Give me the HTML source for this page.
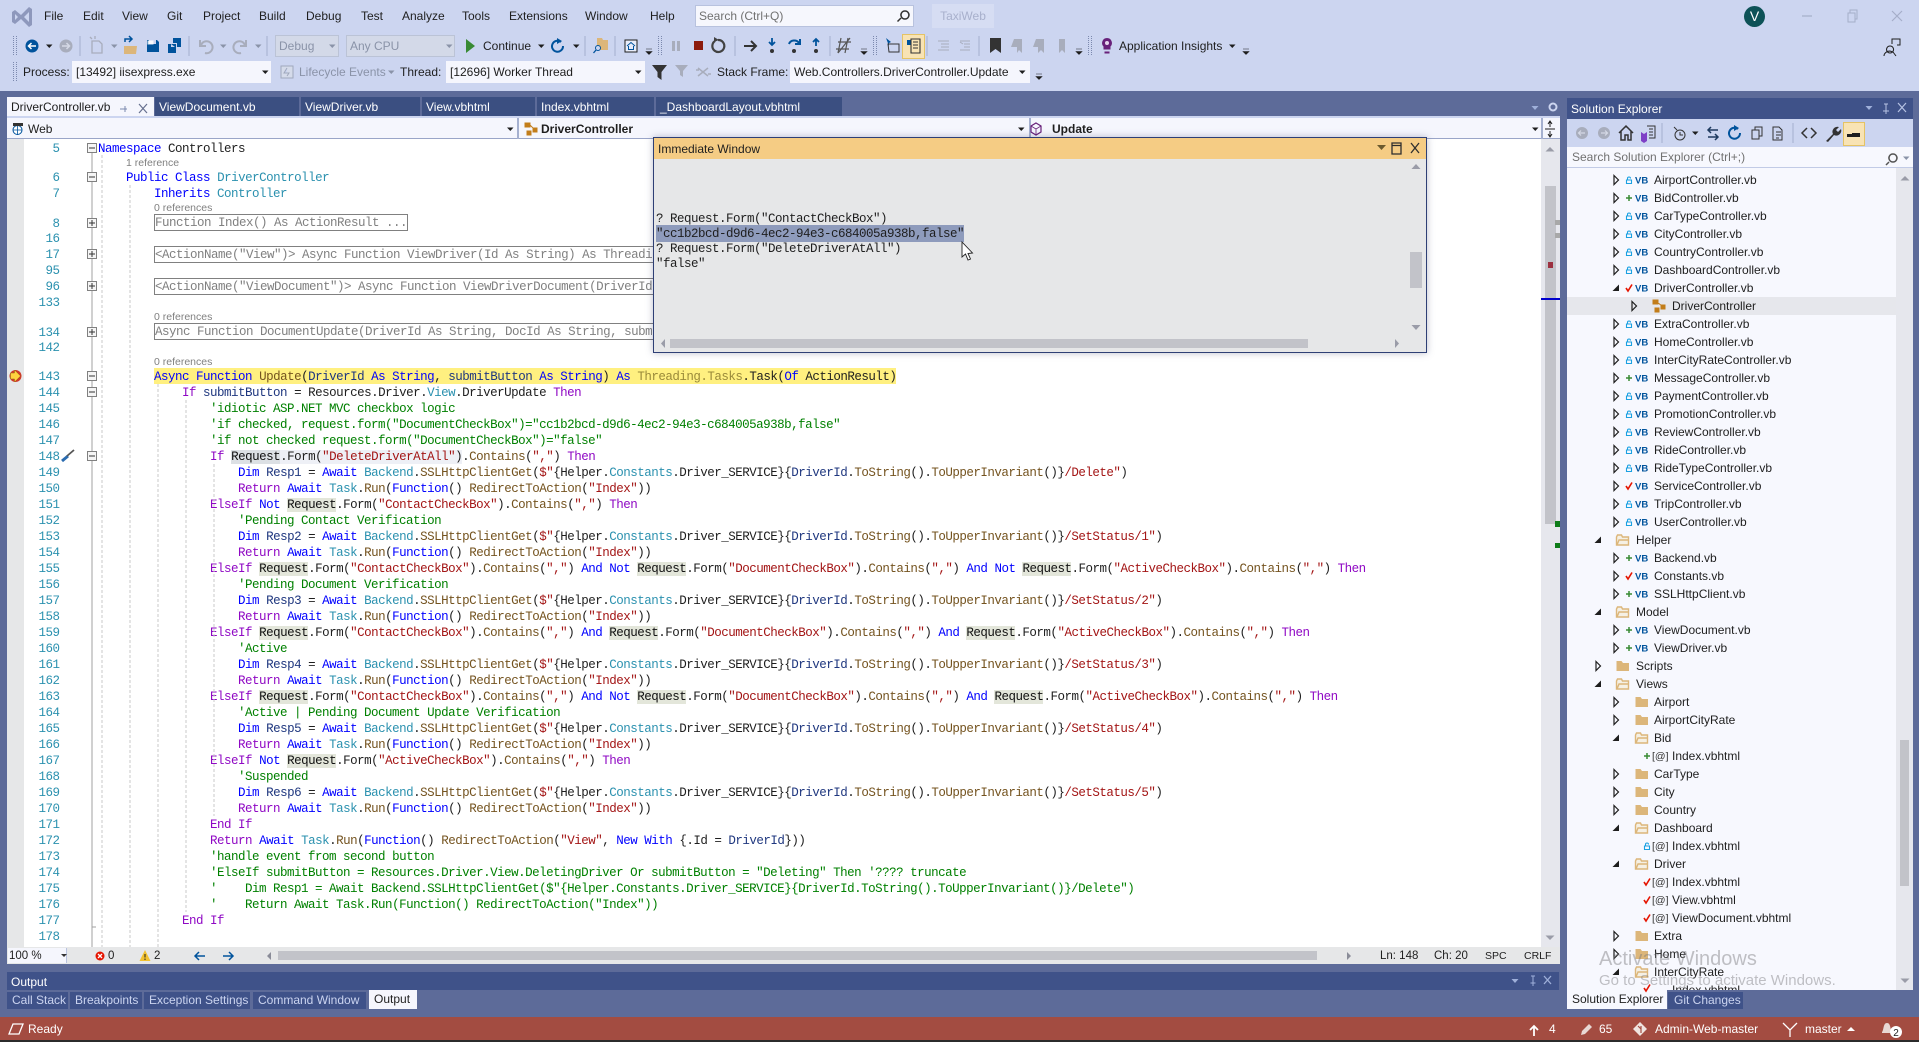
<!DOCTYPE html>
<html><head><meta charset="utf-8"><title>TaxiWeb</title>
<style>
html,body{margin:0;padding:0;width:1919px;height:1042px;overflow:hidden;background:#5D6B99}
body{position:relative;font-family:"Liberation Sans",sans-serif;font-size:12px;color:#1E1E1E}
.a,.m,.t,.r,.e{position:absolute;white-space:pre}
.bx{position:absolute}
.m{top:7px;height:18px;line-height:18px}
.r{height:16px;line-height:16px}
.t{height:18px;line-height:18px}
pre{margin:1px 0 0;position:absolute;font-family:"Liberation Mono",monospace;font-size:12.5px;letter-spacing:-.5px;line-height:16px;font-kerning:none}
.c{position:absolute;left:98px;margin-top:1px;height:16px;line-height:16px;white-space:pre;font-family:"Liberation Mono",monospace;font-size:12.5px;letter-spacing:-.5px;font-kerning:none}
.n{position:absolute;left:24px;margin-top:1px;width:35.5px;text-align:right;color:#2B91AF;height:16px;line-height:16px;font-family:"Liberation Mono",monospace;font-size:12.5px;letter-spacing:-.5px}
.ref{position:absolute;color:#808080;font-size:10.5px;height:14px;line-height:14px;white-space:pre}
.fb{position:absolute;left:154px;height:15px;border:1px solid #808080;color:#808080;line-height:17px;white-space:pre;font-family:"Liberation Mono",monospace;font-size:12.5px;letter-spacing:-.5px;overflow:hidden}
b,i,u,s,em,a,var{font-weight:normal;font-style:normal;text-decoration:none}
b{color:#0000FF} i{color:#8F08C4} u{color:#2B91AF} s{color:#A31515} em{color:#008000} a{color:#74531F} var{color:#1F377F}
mark{background:#E3E6DA;color:#111}
.tb{position:absolute;top:97px;height:19px;line-height:21px;background:#3B4F81;color:#fff;white-space:pre}
.ot{position:absolute;top:992px;height:17px;line-height:17px;background:#3F5289;color:#CBD4F0;white-space:pre}
.combo{position:absolute;top:61px;height:22px;line-height:22px;background:#F5F6FD;white-space:pre}
.st{position:absolute;top:1020px;height:18px;line-height:18px;color:#fff;white-space:pre}
.es{position:absolute;top:948px;height:16px;line-height:16px;font-size:11.5px;white-space:pre}
svg{position:absolute;left:0;top:0}
svg text{font-family:"Liberation Sans",sans-serif}
.vb{font-size:9.5px;font-weight:bold;fill:#00539C}
.at{font-size:10.5px;fill:#333}
</style></head><body>

<!-- title / toolbars -->
<div class="bx" style="left:0;top:0;width:1919px;height:91px;background:#CCD5F0"></div>
<div class="m" style="left:44px">File</div><div class="m" style="left:83px">Edit</div><div class="m" style="left:122px">View</div><div class="m" style="left:167px">Git</div><div class="m" style="left:203px">Project</div><div class="m" style="left:259px">Build</div><div class="m" style="left:306px">Debug</div><div class="m" style="left:361px">Test</div><div class="m" style="left:402px">Analyze</div><div class="m" style="left:462px">Tools</div><div class="m" style="left:509px">Extensions</div><div class="m" style="left:585px">Window</div><div class="m" style="left:650px">Help</div>
<div class="bx" style="left:695px;top:5px;width:217px;height:20px;line-height:20px;background:#F6F7FD;border:1px solid #B8C2DE;color:#717171;text-indent:3px">Search (Ctrl+Q)</div>
<div class="bx" style="left:932px;top:4px;width:62px;height:24px;line-height:24px;background:#D6DDF3;color:#A8B0CC;text-align:center">TaxiWeb</div>
<div class="bx" style="left:1744px;top:6px;width:21px;height:21px;border-radius:50%;background:#0D5257;color:#fff;text-align:center;line-height:21px;font-size:14px">V</div>

<div class="bx" style="left:275px;top:35px;width:62px;height:20px;line-height:20px;background:#D3D9E8;border:1px solid #BBC3D6;color:#8A93A8;text-indent:3px">Debug</div>
<div class="bx" style="left:346px;top:35px;width:107px;height:20px;line-height:20px;background:#D3D9E8;border:1px solid #BBC3D6;color:#8A93A8;text-indent:3px">Any CPU</div>
<div class="a" style="left:483px;top:37px;line-height:18px">Continue</div>
<div class="a" style="left:1119px;top:37px;line-height:18px">Application Insights</div>

<div class="a" style="left:23px;top:63px;line-height:18px">Process:</div>
<div class="combo" style="left:72px;width:199px;text-indent:4px">[13492] iisexpress.exe</div>
<div class="a" style="left:299px;top:63px;line-height:18px;color:#8A93A8">Lifecycle Events</div>
<div class="a" style="left:400px;top:63px;line-height:18px">Thread:</div>
<div class="combo" style="left:446px;width:199px;text-indent:4px">[12696] Worker Thread</div>
<div class="a" style="left:717px;top:63px;line-height:18px">Stack Frame:</div>
<div class="combo" style="left:790px;width:240px;text-indent:4px">Web.Controllers.DriverController.Update</div>
<div class="bx" style="left:902px;top:34px;width:21px;height:23px;background:#F8E3B4;border:1px solid #E5C365"></div>

<!-- doc tabs -->
<div class="tb" style="left:7px;width:147px;background:#F5F6FD;color:#1E1E1E;text-indent:4px;height:21px">DriverController.vb</div>
<div class="tb" style="left:155px;width:144px;text-indent:4px">ViewDocument.vb</div>
<div class="tb" style="left:301px;width:119px;text-indent:4px">ViewDriver.vb</div>
<div class="tb" style="left:422px;width:113px;text-indent:4px">View.vbhtml</div>
<div class="tb" style="left:537px;width:117px;text-indent:4px">Index.vbhtml</div>
<div class="tb" style="left:656px;width:186px;text-indent:4px">_DashboardLayout.vbhtml</div>

<!-- nav bar -->
<div class="bx" style="left:7px;top:116px;width:1553px;height:2px;background:#CCD5F0"></div>
<div class="bx" style="left:7px;top:118px;width:1553px;height:21px;background:#F5F6FD;border-bottom:1px solid #9AA5C8;box-sizing:border-box"></div>
<div class="bx" style="left:517px;top:118px;width:2px;height:21px;background:#A5B0CF"></div>
<div class="bx" style="left:1029px;top:118px;width:2px;height:21px;background:#A5B0CF"></div>
<div class="bx" style="left:1541px;top:118px;width:2px;height:21px;background:#A5B0CF"></div>
<div class="a" style="left:28px;top:121px;line-height:17px">Web</div>
<div class="a" style="left:541px;top:121px;line-height:17px;font-weight:bold">DriverController</div>
<div class="a" style="left:1052px;top:121px;line-height:17px;font-weight:bold">Update</div>

<!-- editor -->
<div class="bx" id="ed" style="left:7px;top:139px;width:1553px;height:808px;background:#fff"></div>
<div class="bx" style="left:7px;top:139px;width:17px;height:808px;background:#E6E7E8"></div>
<div class="bx" style="left:1541px;top:139px;width:19px;height:808px;background:#E6E7ED"></div>
<div class="bx" style="left:1545px;top:186px;width:11px;height:338px;background:#C2C3C9"></div>
<div class="bx" style="left:154px;top:368px;width:742px;height:16px;background:#FFF080"></div>

<div class="n" style="top:140px">5</div><div class="n" style="top:169px">6</div><div class="n" style="top:185px">7</div><div class="n" style="top:215px">8</div><div class="n" style="top:230px">16</div><div class="n" style="top:246px">17</div><div class="n" style="top:262px">95</div><div class="n" style="top:278px">96</div><div class="n" style="top:294px">133</div><div class="n" style="top:324px">134</div><div class="n" style="top:339px">142</div>
<pre style="left:24px;top:368px;width:35.5px;text-align:right;color:#2B91AF">143
144
145
146
147
148
149
150
151
152
153
154
155
156
157
158
159
160
161
162
163
164
165
166
167
168
169
170
171
172
173
174
175
176
177
178</pre>

<div class="c" style="top:140px"><b>Namespace</b> Controllers</div>
<div class="ref" style="left:126px;top:156px">1 reference</div>
<div class="c" style="top:169px;left:126px"><b>Public</b> <b>Class</b> <u>DriverController</u></div>
<div class="c" style="top:185px;left:154px"><b>Inherits</b> <u>Controller</u></div>
<div class="ref" style="left:154px;top:201px">0 references</div>
<div class="fb" style="top:214px;width:252px">Function Index() As ActionResult ...</div>
<div class="fb" style="top:246px;width:520px">&lt;ActionName("View")&gt; Async Function ViewDriver(Id As String) As Threading.Tasks</div>
<div class="fb" style="top:278px;width:520px">&lt;ActionName("ViewDocument")&gt; Async Function ViewDriverDocument(DriverId As String</div>
<div class="ref" style="left:154px;top:310px">0 references</div>
<div class="fb" style="top:323px;width:520px">Async Function DocumentUpdate(DriverId As String, DocId As String, submitButton As</div>
<div class="ref" style="left:154px;top:355px">0 references</div>

<pre style="left:98px;top:368px">        <b>Async</b> <b>Function</b> <a>Update</a>(<var>DriverId</var> <b>As</b> <b>String</b>, <var>submitButton</var> <b>As</b> <b>String</b>) <b>As</b> <span style="color:#9a8a3a">Threading.Tasks</span>.Task(<b>Of</b> ActionResult)
            <i>If</i> <var>submitButton</var> = Resources.Driver.<u>View</u>.DriverUpdate <i>Then</i>
                <em>'idiotic ASP.NET MVC checkbox logic</em>
                <em>'if checked, request.form("DocumentCheckBox")="cc1b2bcd-d9d6-4ec2-94e3-c684005a938b,false"</em>
                <em>'if not checked request.form("DocumentCheckBox")="false"</em>
                <i>If</i> <mark style="background:#DCE0E4">Request</mark><span style="background:#EEF0F6">.Form(<s>"DeleteDriverAtAll"</s>)</span>.<a>Contains</a>(<s>","</s>) <i>Then</i>
                    <b>Dim</b> <var>Resp1</var> = <b>Await</b> <u>Backend</u>.<a>SSLHttpClientGet</a>(<s>$"</s>{Helper.<u>Constants</u>.Driver_SERVICE}{<var>DriverId</var>.<a>ToString</a>().<a>ToUpperInvariant</a>()}<s>/Delete"</s>)
                    <i>Return</i> <b>Await</b> <u>Task</u>.<a>Run</a>(<b>Function</b>() <a>RedirectToAction</a>(<s>"Index"</s>))
                <i>ElseIf</i> <b>Not</b> <mark>Request</mark>.Form(<s>"ContactCheckBox"</s>).<a>Contains</a>(<s>","</s>) <i>Then</i>
                    <em>'Pending Contact Verification</em>
                    <b>Dim</b> <var>Resp2</var> = <b>Await</b> <u>Backend</u>.<a>SSLHttpClientGet</a>(<s>$"</s>{Helper.<u>Constants</u>.Driver_SERVICE}{<var>DriverId</var>.<a>ToString</a>().<a>ToUpperInvariant</a>()}<s>/SetStatus/1"</s>)
                    <i>Return</i> <b>Await</b> <u>Task</u>.<a>Run</a>(<b>Function</b>() <a>RedirectToAction</a>(<s>"Index"</s>))
                <i>ElseIf</i> <mark>Request</mark>.Form(<s>"ContactCheckBox"</s>).<a>Contains</a>(<s>","</s>) <b>And</b> <b>Not</b> <mark>Request</mark>.Form(<s>"DocumentCheckBox"</s>).<a>Contains</a>(<s>","</s>) <b>And</b> <b>Not</b> <mark>Request</mark>.Form(<s>"ActiveCheckBox"</s>).<a>Contains</a>(<s>","</s>) <i>Then</i>
                    <em>'Pending Document Verification</em>
                    <b>Dim</b> <var>Resp3</var> = <b>Await</b> <u>Backend</u>.<a>SSLHttpClientGet</a>(<s>$"</s>{Helper.<u>Constants</u>.Driver_SERVICE}{<var>DriverId</var>.<a>ToString</a>().<a>ToUpperInvariant</a>()}<s>/SetStatus/2"</s>)
                    <i>Return</i> <b>Await</b> <u>Task</u>.<a>Run</a>(<b>Function</b>() <a>RedirectToAction</a>(<s>"Index"</s>))
                <i>ElseIf</i> <mark>Request</mark>.Form(<s>"ContactCheckBox"</s>).<a>Contains</a>(<s>","</s>) <b>And</b> <mark>Request</mark>.Form(<s>"DocumentCheckBox"</s>).<a>Contains</a>(<s>","</s>) <b>And</b> <mark>Request</mark>.Form(<s>"ActiveCheckBox"</s>).<a>Contains</a>(<s>","</s>) <i>Then</i>
                    <em>'Active</em>
                    <b>Dim</b> <var>Resp4</var> = <b>Await</b> <u>Backend</u>.<a>SSLHttpClientGet</a>(<s>$"</s>{Helper.<u>Constants</u>.Driver_SERVICE}{<var>DriverId</var>.<a>ToString</a>().<a>ToUpperInvariant</a>()}<s>/SetStatus/3"</s>)
                    <i>Return</i> <b>Await</b> <u>Task</u>.<a>Run</a>(<b>Function</b>() <a>RedirectToAction</a>(<s>"Index"</s>))
                <i>ElseIf</i> <mark>Request</mark>.Form(<s>"ContactCheckBox"</s>).<a>Contains</a>(<s>","</s>) <b>And</b> <b>Not</b> <mark>Request</mark>.Form(<s>"DocumentCheckBox"</s>).<a>Contains</a>(<s>","</s>) <b>And</b> <mark>Request</mark>.Form(<s>"ActiveCheckBox"</s>).<a>Contains</a>(<s>","</s>) <i>Then</i>
                    <em>'Active | Pending Document Update Verification</em>
                    <b>Dim</b> <var>Resp5</var> = <b>Await</b> <u>Backend</u>.<a>SSLHttpClientGet</a>(<s>$"</s>{Helper.<u>Constants</u>.Driver_SERVICE}{<var>DriverId</var>.<a>ToString</a>().<a>ToUpperInvariant</a>()}<s>/SetStatus/4"</s>)
                    <i>Return</i> <b>Await</b> <u>Task</u>.<a>Run</a>(<b>Function</b>() <a>RedirectToAction</a>(<s>"Index"</s>))
                <i>ElseIf</i> <b>Not</b> <mark>Request</mark>.Form(<s>"ActiveCheckBox"</s>).<a>Contains</a>(<s>","</s>) <i>Then</i>
                    <em>'Suspended</em>
                    <b>Dim</b> <var>Resp6</var> = <b>Await</b> <u>Backend</u>.<a>SSLHttpClientGet</a>(<s>$"</s>{Helper.<u>Constants</u>.Driver_SERVICE}{<var>DriverId</var>.<a>ToString</a>().<a>ToUpperInvariant</a>()}<s>/SetStatus/5"</s>)
                    <i>Return</i> <b>Await</b> <u>Task</u>.<a>Run</a>(<b>Function</b>() <a>RedirectToAction</a>(<s>"Index"</s>))
                <i>End If</i>
                <i>Return</i> <b>Await</b> <u>Task</u>.<a>Run</a>(<b>Function</b>() <a>RedirectToAction</a>(<s>"View"</s>, <b>New</b> <b>With</b> {.Id = <var>DriverId</var>}))
                <em>'handle event from second button</em>
                <em>'ElseIf submitButton = Resources.Driver.View.DeletingDriver Or submitButton = "Deleting" Then '???? truncate</em>
                <em>'    Dim Resp1 = Await Backend.SSLHttpClientGet($"{Helper.Constants.Driver_SERVICE}{DriverId.ToString().ToUpperInvariant()}/Delete")</em>
                <em>'    Return Await Task.Run(Function() RedirectToAction("Index"))</em>
            <i>End If</i></pre>

<!-- editor status -->
<div class="bx" style="left:7px;top:947px;width:1553px;height:17px;background:#E6E7E8"></div>
<div class="bx" style="left:8px;top:948px;width:58px;height:15px;background:#F5F6FD;border-right:1px solid #B8C2DE"></div>
<div class="es" style="left:9px">100 %</div><div class="es" style="left:108px">0</div><div class="es" style="left:154px">2</div>
<div class="bx" style="left:278px;top:951px;width:1039px;height:9px;background:#C2C3C9"></div>
<div class="es" style="left:1380px">Ln: 148</div><div class="es" style="left:1434px">Ch: 20</div><div class="es" style="left:1485px;font-size:10.5px">SPC</div><div class="es" style="left:1524px;font-size:10.5px">CRLF</div>

<!-- output panel -->
<div class="bx" style="left:7px;top:972px;width:1552px;height:18px;background:#3F5289;color:#fff;line-height:21px;text-indent:4px">Output</div>
<div class="ot" style="left:7px;width:61px;text-indent:5px">Call Stack</div>
<div class="ot" style="left:70px;width:72px;text-indent:5px">Breakpoints</div>
<div class="ot" style="left:144px;width:106px;text-indent:5px">Exception Settings</div>
<div class="ot" style="left:253px;width:113px;text-indent:5px">Command Window</div>
<div class="ot" style="left:369px;width:48px;top:990px;height:19px;line-height:19px;background:#F5F6FD;color:#1E1E1E;text-indent:5px">Output</div>

<!-- status bar -->
<div class="bx" style="left:0;top:1017px;width:1919px;height:23px;background:#A34C41"></div>
<div class="bx" style="left:0;top:1040px;width:1919px;height:2px;background:#2B2B2B"></div>
<div class="st" style="left:28px">Ready</div>
<div class="st" style="left:1549px">4</div><div class="st" style="left:1599px">65</div><div class="st" style="left:1655px">Admin-Web-master</div><div class="st" style="left:1805px">master</div>

<!-- solution explorer -->
<div class="bx" style="left:1567px;top:98px;width:346px;height:21px;background:#3F5289;color:#fff;line-height:22px;text-indent:4px">Solution Explorer</div>
<div class="bx" style="left:1567px;top:119px;width:346px;height:28px;background:#CCD5F0"></div>
<div class="bx" style="left:1843px;top:122px;width:20px;height:22px;background:#F8E3B4;border:1px solid #E5C365"></div>
<div class="bx" style="left:1567px;top:147px;width:346px;height:21px;background:#F7F8FE;border-bottom:1px solid #C2CBE6;box-sizing:border-box;color:#717171;line-height:21px;text-indent:5px">Search Solution Explorer (Ctrl+;)</div>
<div class="bx" style="left:1567px;top:168px;width:346px;height:822px;background:#F7F8FE;overflow:hidden" id="tree">
<div class="bx" style="left:0;top:129px;width:329px;height:18px;background:#E6E7EC"></div>
<div class="bx" style="left:329px;top:0;width:17px;height:822px;background:#E6E7ED"></div>
<div class="bx" style="left:333px;top:572px;width:9px;height:146px;background:#C2C3C9"></div>
<div class="t" style="left:87px;top:3px">AirportController.vb</div>
<div class="t" style="left:87px;top:21px">BidController.vb</div>
<div class="t" style="left:87px;top:39px">CarTypeController.vb</div>
<div class="t" style="left:87px;top:57px">CityController.vb</div>
<div class="t" style="left:87px;top:75px">CountryController.vb</div>
<div class="t" style="left:87px;top:93px">DashboardController.vb</div>
<div class="t" style="left:87px;top:111px">DriverController.vb</div>
<div class="t" style="left:105px;top:129px">DriverController</div>
<div class="t" style="left:87px;top:147px">ExtraController.vb</div>
<div class="t" style="left:87px;top:165px">HomeController.vb</div>
<div class="t" style="left:87px;top:183px">InterCityRateController.vb</div>
<div class="t" style="left:87px;top:201px">MessageController.vb</div>
<div class="t" style="left:87px;top:219px">PaymentController.vb</div>
<div class="t" style="left:87px;top:237px">PromotionController.vb</div>
<div class="t" style="left:87px;top:255px">ReviewController.vb</div>
<div class="t" style="left:87px;top:273px">RideController.vb</div>
<div class="t" style="left:87px;top:291px">RideTypeController.vb</div>
<div class="t" style="left:87px;top:309px">ServiceController.vb</div>
<div class="t" style="left:87px;top:327px">TripController.vb</div>
<div class="t" style="left:87px;top:345px">UserController.vb</div>
<div class="t" style="left:69px;top:363px">Helper</div>
<div class="t" style="left:87px;top:381px">Backend.vb</div>
<div class="t" style="left:87px;top:399px">Constants.vb</div>
<div class="t" style="left:87px;top:417px">SSLHttpClient.vb</div>
<div class="t" style="left:69px;top:435px">Model</div>
<div class="t" style="left:87px;top:453px">ViewDocument.vb</div>
<div class="t" style="left:87px;top:471px">ViewDriver.vb</div>
<div class="t" style="left:69px;top:489px">Scripts</div>
<div class="t" style="left:69px;top:507px">Views</div>
<div class="t" style="left:87px;top:525px">Airport</div>
<div class="t" style="left:87px;top:543px">AirportCityRate</div>
<div class="t" style="left:87px;top:561px">Bid</div>
<div class="t" style="left:105px;top:579px">Index.vbhtml</div>
<div class="t" style="left:87px;top:597px">CarType</div>
<div class="t" style="left:87px;top:615px">City</div>
<div class="t" style="left:87px;top:633px">Country</div>
<div class="t" style="left:87px;top:651px">Dashboard</div>
<div class="t" style="left:105px;top:669px">Index.vbhtml</div>
<div class="t" style="left:87px;top:687px">Driver</div>
<div class="t" style="left:105px;top:705px">Index.vbhtml</div>
<div class="t" style="left:105px;top:723px">View.vbhtml</div>
<div class="t" style="left:105px;top:741px">ViewDocument.vbhtml</div>
<div class="t" style="left:87px;top:759px">Extra</div>
<div class="t" style="left:87px;top:777px">Home</div>
<div class="t" style="left:87px;top:795px">InterCityRate</div>
<div class="t" style="left:105px;top:813px">Index.vbhtml</div>
</div>
<div class="bx" style="left:1567px;top:990px;width:100px;height:19px;line-height:19px;background:#F7F8FE;text-indent:5px">Solution Explorer</div>
<div class="ot" style="left:1668px;width:75px;text-indent:6px">Git Changes</div>

<!-- icons -->
<svg width="1919" height="1042" viewBox="0 0 1919 1042">
<defs>
<path id="dd" d="M-3-1.5h6.5l-3.2 3.5z" fill="#1E1E1E"/>
<path id="ddg" d="M-3-1.5h6.5l-3.2 3.5z" fill="#8A93A8"/>
<path id="ddw" d="M-3.500-2h7l-3.500 4z" fill="#9FB0DA"/>
<path id="grip" d="M-1.500-10V10M1.500-10V10" stroke="#7C89AE" stroke-dasharray="1 1" fill="none"/>
<path id="sep" d="M0-10V10" stroke="#A3AFCE"/>
<path id="chev" d="M-3 1h6M-3 3.500h6l-3 3z" fill="#1E1E1E" stroke="#1E1E1E" stroke-width=".6"/>
<path id="ca" d="M-2-4.500L2.500 0L-2 4.500Z" fill="none" stroke="#1E1E1E" stroke-width="1.200"/>
<path id="ex" d="M3-3.500V3H-3.500Z" fill="#1E1E1E"/>
<path id="lk" d="M-2.500 0h5v3.500h-5zM-1.500 0v-1.500a1.500 1.500 0 0 1 3 0" fill="none" stroke="#1BA1E2" stroke-width="1.100"/>
<path id="pl" d="M-3 0h6M0-3v6" stroke="#388A34" stroke-width="1.500"/>
<path id="ck" d="M-3 0L-1 3L3-3.500" stroke="#E51400" stroke-width="1.600" fill="none"/>
<path id="fo" d="M-6.500-5h5l1.500 2h6v8h-12.500z" fill="#DCB67A"/>
<path id="fe" d="M-6.500 5V-3l1-2h4l1 2h6v8zM-6 5l2-5h10" fill="#F5F0E4" stroke="#DCB67A" stroke-width="1.400"/>
<path id="fold" d="M-4.500-4.500h9v9h-9z" fill="#F5F5F5" stroke="#808080"/>
<path id="up" d="M-4.500 2.500h9l-4.500-4.500z" fill="#9A9CA8"/>
<path id="dn" d="M-4.500-2.500h9l-4.500 4.500z" fill="#9A9CA8"/>
</defs>

<!-- VS logo -->
<path d="M12 12l3-2 6 5 8-8 3 2v16l-3 2-8-8-6 5-3-2zM15 14v6l3-3zM29 12l-5 5 5 5z" fill="#8E98BC" fill-rule="evenodd"/>
<!-- search glass -->
<path d="M905 11a4 4 0 1 1-.1 0zM901 18l-3.500 3.500" fill="none" stroke="#333" stroke-width="1.500"/>
<!-- window controls -->
<path d="M1802 16h10" stroke="#A5AEC9" stroke-width="1.200"/>
<path d="M1848 13h7v9h-7zM1850 13v-3h7v9h-2" fill="none" stroke="#A5AEC9"/>
<path d="M1892 11l10 10M1902 11l-10 10" stroke="#A5AEC9" stroke-width="1.200"/>
<!-- feedback -->
<path d="M1890 46a3.500 3.500 0 1 0 .1 0zM1884 56a6 5 0 0 1 6-5l3 1 3 4M1892 44v-5h8v6h-3" fill="none" stroke="#1E1E1E"/>

<!-- toolbar 1 -->
<use href="#grip" x="15" y="46"/>
<circle cx="32" cy="46" r="6.500" fill="#00539C"/><path d="M36 46h-7M31.500 43L28.500 46l3 3" stroke="#fff" stroke-width="1.500" fill="none"/>
<use href="#dd" x="49" y="46"/>
<circle cx="66" cy="46" r="6.500" fill="#A8ADBC"/><path d="M62 46h7M66.500 43l3 3-3 3" stroke="#D5D9E5" stroke-width="1.500" fill="none"/>
<use href="#sep" x="80" y="46"/>
<path d="M92 41h7l3 3v9H92zM90 37l2 2M95 36v3" fill="none" stroke="#A8ADBC" stroke-width="1.300"/>
<use href="#ddg" x="114" y="46"/>
<path d="M124 46h13l-1 8h-12z" fill="#DCB67A"/><path d="M125 42v-3h6M129 36l3 3-3 3" fill="none" stroke="#00539C" stroke-width="1.500"/>
<path d="M147 40h10l2 2v10h-12zM149 40v4h7v-4M149 52v-5h8v5" fill="#00539C"/>
<path d="M147.500 40.500h6v4h-6z" fill="#fff" opacity=".85"/>
<path d="M168 44h8v9h-8zM171 44v3h4" fill="#00539C"/><path d="M173 38h8v9h-4v-4h-4z" fill="#00539C"/>
<use href="#sep" x="189" y="46"/>
<path d="M200 40v6h6M201 45a6 6 0 1 1 4 8" fill="none" stroke="#A8ADBC" stroke-width="2"/>
<use href="#ddg" x="223" y="46"/>
<path d="M246 40v6h-6M245 45a6 6 0 1 0-4 8" fill="none" stroke="#A8ADBC" stroke-width="2"/>
<use href="#ddg" x="258" y="46"/>
<use href="#sep" x="267" y="46"/>
<use href="#ddg" x="332" y="46"/><use href="#ddg" x="449" y="46"/>
<path d="M466 39l9 7-9 7z" fill="#388A34"/>
<use href="#dd" x="541" y="46"/>
<path d="M561 42a5.500 5.500 0 1 0 2 4" fill="none" stroke="#00539C" stroke-width="2"/><path d="M557 38v6l5-3z" fill="#00539C"/>
<use href="#dd" x="576" y="46"/>
<use href="#sep" x="585" y="46"/>
<path d="M597 38h5l1 2h5v10h-11z" fill="#DCB67A"/><circle cx="598" cy="48" r="2.500" fill="#CCD5F0" stroke="#00539C"/><path d="M596 50l-2.500 3" stroke="#00539C" stroke-width="1.300"/>
<use href="#sep" x="615" y="46"/>
<path d="M625 40h12v12h-12z" fill="#E9EDFA" stroke="#1E1E1E"/><path d="M627 46l4-3.500 4 3.500M628.500 46v3.500h5V46" fill="none" stroke="#00539C"/>
<use href="#chev" x="649" y="48"/><use href="#grip" x="660" y="46"/>
<path d="M672 41h3v10h-3zM677 41h3v10h-3z" fill="#A8ADBC"/>
<path d="M694 41h9v9h-9z" fill="#8C1B0C"/>
<path d="M715 41a6 6 0 1 0 3-1" fill="none" stroke="#424242" stroke-width="2.200"/><path d="M714 37v5l5-2z" fill="#424242"/>
<use href="#sep" x="735" y="46"/>
<path d="M744 46h12M751 41l5 5-5 5" fill="none" stroke="#333" stroke-width="2"/>
<path d="M772 38v6M769 42l3 3 3-3" stroke="#00539C" stroke-width="1.800" fill="none"/><circle cx="772" cy="51" r="2" fill="#333"/>
<path d="M789 44a5.500 5 0 0 1 10-1M800 39v5h-5" fill="none" stroke="#00539C" stroke-width="2"/><circle cx="794" cy="51" r="2" fill="#333"/>
<path d="M816 46v-7M813 42l3-3 3 3" stroke="#00539C" stroke-width="1.800" fill="none"/><circle cx="816" cy="51" r="2" fill="#333"/>
<use href="#sep" x="830" y="46"/>
<path d="M841 38l-3 15M848 38l-3 15M838 42h13M836 49h13M850 38l-12 15" fill="none" stroke="#555" stroke-width="1.200"/>
<use href="#chev" x="864" y="48"/><use href="#grip" x="875" y="46"/>
<path d="M886 38l5 4-2 1v3" fill="#00539C"/><path d="M888 44h11v8h-10z" fill="none" stroke="#333"/>
<path d="M907 40h4v5h-4z" fill="#00539C"/><path d="M911 39h9v14h-9zM913 42h5M913 45h5M913 48h5" fill="none" stroke="#333" stroke-width="1.100"/>
<use href="#sep" x="927" y="46"/>
<path d="M938 41h11M941 44h8M941 47h8M938 50h11" stroke="#A8ADBC"/>
<path d="M960 41h10M964 44h6M964 47h6M960 50h10M960 42l3 2" stroke="#A8ADBC"/>
<use href="#sep" x="979" y="46"/>
<path d="M990 38h11v15l-5.500-4-5.500 4z" fill="#333"/>
<path d="M1014 39h8v14l-3-3-2 3v-6h-6z" fill="#A8ADBC"/><path d="M1036 39h8v14l-3-3-3 3v-6h-5z" fill="#A8ADBC"/><path d="M1057 39h8v14l-3-3-3 3v-14z" fill="#A8ADBC"/>
<use href="#chev" x="1079" y="48"/><use href="#grip" x="1090" y="46"/>
<path d="M1107 38a5 5 0 0 1 3.500 8.500v3h-7v-3a5 5 0 0 1 3.500-8.500zM1104.500 51.500h5v2h-5z" fill="#68217A"/><circle cx="1107" cy="43" r="2" fill="#E6D5EC"/>
<use href="#dd" x="1232" y="46"/><use href="#chev" x="1246" y="48"/>

<!-- toolbar 2 -->
<use href="#grip" x="15" y="72"/>
<use href="#dd" x="265" y="72"/>
<path d="M281 66h12v12h-12zM287 68l-3 5h5l-2 3" fill="#D5DBEA" stroke="#A0A8BC"/>
<use href="#ddg" x="391" y="72"/><use href="#dd" x="638" y="72"/>
<path d="M652 65h15l-5.500 7v8l-4-3v-5z" fill="#333"/>
<path d="M675 65h13l-5 6v6l-3-2v-4z" fill="#A8ADBC"/><path d="M698 68l10 8M708 68l-10 8M696 70h3M708 74h3" stroke="#A8ADBC" stroke-width="1.500"/>
<use href="#dd" x="1022" y="72"/><use href="#chev" x="1039" y="73"/>

<!-- doc tab marks -->
<path d="M122 109h5M125 106v6M122 109h-2" stroke="#7C89AE"/>
<path d="M139 104l8 9M147 104l-8 9" stroke="#66708F" stroke-width="1.200"/>
<use href="#ddw" x="1535" y="108"/>
<circle cx="1553" cy="107" r="3.500" fill="none" stroke="#CCD5F0" stroke-width="2"/>
<use href="#dd" x="510" y="129"/><use href="#dd" x="1021" y="129"/><use href="#dd" x="1535" y="129"/>
<circle cx="17.500" cy="130" r="4.500" fill="#fff" stroke="#00539C"/><path d="M13 123h10v3H13z" fill="#333"/><path d="M13 130h9M17.500 126v9" stroke="#00539C" stroke-width=".8"/>
<path d="M525 123h5v4h-5zM533 128h4v4h-4zM527 131h4v4h-4zM530 125l4 4" fill="#C27D1A" stroke="#C27D1A"/>
<path d="M1036 123l5 3v6l-5 3-5-3v-6z" fill="none" stroke="#68217A" stroke-width="1.200"/><path d="M1031 126l5 3 5-3M1036 129v6" fill="none" stroke="#68217A" stroke-width=".8"/>
<path d="M1545 129h10M1550 121v6M1548 124l2-3 2 3M1550 131v6M1548 134l2 3 2-3" stroke="#1E1E1E" fill="none"/>

<!-- gutter: fold lines & guides -->
<path d="M92 153V172M92 182V218M92 228V249M92 259V281M92 291V327M92 337V371M92 381V387M92 397V451M92 461V947" stroke="#A0A0A0"/>
<path d="M102 155V947M130 185V947M158 384V947M186 400V912M214 464V816" stroke="#C8C8C8" stroke-dasharray="3 2"/>
<use href="#fold" x="92" y="148"/><path d="M89 148h6" stroke="#333"/>
<use href="#fold" x="92" y="177"/><path d="M89 177h6" stroke="#333"/>
<use href="#fold" x="92" y="223"/><path d="M89 223h6M92 220v6" stroke="#333"/>
<use href="#fold" x="92" y="254"/><path d="M89 254h6M92 251v6" stroke="#333"/>
<use href="#fold" x="92" y="286"/><path d="M89 286h6M92 283v6" stroke="#333"/>
<use href="#fold" x="92" y="332"/><path d="M89 332h6M92 329v6" stroke="#333"/>
<use href="#fold" x="92" y="376"/><path d="M89 376h6" stroke="#333"/>
<use href="#fold" x="92" y="392"/><path d="M89 392h6" stroke="#333"/>
<use href="#fold" x="92" y="456"/><path d="M89 456h6" stroke="#333"/>
<path d="M92 927h4" stroke="#A0A0A0"/>
<circle cx="15.500" cy="376" r="6" fill="#D13A2A"/><path d="M10.500 373h4v-3l6 6-6 6v-3h-4z" fill="#FFD23F" stroke="#8B6A10" stroke-width=".5"/>
<path d="M62 461l6-5" stroke="#2B6CB0" stroke-width="3"/><path d="M67 456l7-6" stroke="#555" stroke-width="1.800"/>

<!-- overview marks -->
<use href="#up" x="1550" y="149"/><use href="#dn" x="1550" y="938"/>
<rect x="1555" y="220" width="5" height="5" fill="#A8A8A8"/><rect x="1555" y="233" width="5" height="5" fill="#A8A8A8"/>
<rect x="1548" y="262" width="5" height="6" fill="#9C3140"/>
<rect x="1541" y="298" width="19" height="2" fill="#0000CD"/>
<rect x="1555" y="521" width="5" height="6" fill="#0E7C19"/><rect x="1555" y="543" width="5" height="5" fill="#0E7C19"/>

<!-- editor status icons -->
<circle cx="100" cy="956" r="4.500" fill="#E51400"/><path d="M98 954l4 4M102 954l-4 4" stroke="#fff" stroke-width="1.300"/>
<path d="M145 950l5.500 11h-11z" fill="#F2C230"/><path d="M145 954v3.500M145 958.500v1.500" stroke="#1E1E1E"/>
<path d="M205 956h-10M199 952l-4 4 4 4" fill="none" stroke="#00539C" stroke-width="1.500"/>
<path d="M223 956h10M229 952l4 4-4 4" fill="none" stroke="#00539C" stroke-width="1.500"/>
<path d="M62 954h6l-3 3z" fill="#333" transform="translate(-1,0)"/>
<path d="M271 952v8l-4-4z" fill="#8A8C98"/><path d="M1347 952v8l4-4z" fill="#8A8C98"/>

<!-- output controls -->
<use href="#ddw" x="1515" y="981"/><path d="M1531 976h4M1533 976v7M1530.500 983h5M1533 983v3" stroke="#9FB0DA" fill="none"/><path d="M1544 976l7 8M1551 976l-7 8" stroke="#9FB0DA" stroke-width="1.300"/>

<!-- status bar icons -->
<path d="M9 1034l4-10h10l-4 10z" fill="none" stroke="#fff" stroke-width="1.300"/>
<path d="M1534 1036v-10M1530 1030l4-4 4 4" fill="none" stroke="#fff" stroke-width="1.800"/>
<path d="M1581 1035l1-4 7-7 3 3-7 7z" fill="#E8D8D4"/>
<path d="M1640 1022l7 7-7 7-7-7z" fill="#F0E4E0"/><path d="M1638 1026l3 3v4M1641 1026v3" stroke="#A34C41" stroke-width="1.200" fill="none"/>
<path d="M1783 1023l7 7 7-7M1790 1030v7" fill="none" stroke="#fff" stroke-width="1.300"/>
<path d="M1847 1031h8l-4-4z" fill="#fff"/>
<path d="M1882 1033v-1c2-2 1-9 5-9s3 7 5 9v1z" fill="#E8D8D4"/>
<circle cx="1896" cy="1032" r="6" fill="#fff"/><text x="1896" y="1036" font-size="10" text-anchor="middle" fill="#1E1E1E">2</text>

<!-- solution explorer icons -->
<use href="#ddw" x="1869" y="108"/><path d="M1884 104h4M1886 104v7M1883 111h6M1886 111v3" stroke="#B7C3E4" fill="none"/><path d="M1898 103l8 9M1906 103l-8 9" stroke="#B7C3E4" stroke-width="1.200"/>
<circle cx="1582" cy="133" r="6" fill="#A8ADBC"/><path d="M1585 133h-6M1581 130.500l-2.500 2.500 2.500 2.500" stroke="#D5D9E5" stroke-width="1.200" fill="none"/>
<circle cx="1604" cy="133" r="6" fill="#A8ADBC"/><path d="M1601 133h6M1605 130.500l2.500 2.500-2.500 2.500" stroke="#D5D9E5" stroke-width="1.200" fill="none"/>
<path d="M1619 133l7-7 7 7M1621 131v9h4v-5h3v5h3v-9" fill="none" stroke="#333" stroke-width="1.500"/>
<path d="M1641 132l3 2 3-2v9l-3 2-3-2z" fill="#7E3FC6"/><path d="M1647 126h8v12h-6" fill="none" stroke="#333"/><path d="M1649 129h4M1649 132h4M1649 135h4" stroke="#333"/>
<use href="#sep" x="1662" y="133"/>
<circle cx="1680" cy="135" r="5" fill="none" stroke="#333"/><path d="M1680 132v3h3M1674 127l3 3" stroke="#333" fill="none"/>
<use href="#dd" x="1695" y="133"/>
<path d="M1708 130h10M1711 127l-3 3 3 3M1718 137h-10M1715 134l3 3-3 3" fill="none" stroke="#1E3A5F" stroke-width="1.500"/>
<path d="M1738 129a5.500 5.500 0 1 0 2 4" fill="none" stroke="#00539C" stroke-width="2"/><path d="M1734 125v6l5-3z" fill="#00539C"/>
<path d="M1752 130h7v9h-7zM1755 130v-3h7v9h-3" fill="none" stroke="#333"/>
<path d="M1773 127h6l3 3v10h-9zM1776 132h5M1776 135h5M1776 138h3" fill="none" stroke="#333"/>
<use href="#sep" x="1793" y="133"/>
<path d="M1807 128l-5 5 5 5M1811 128l5 5-5 5" fill="none" stroke="#333" stroke-width="1.500"/>
<path d="M1826 141l7-7a5 5 0 0 1 6-7l-3 3 2 2 3-3a5 5 0 0 1-7 6l-6 7z" fill="#333"/>
<path d="M1847 134h5v-1h8v4h-13z" fill="#1E1E1E"/>
<path d="M1893 154a4 4 0 1 1-.1 0zM1889 162l-3 3" fill="none" stroke="#555" stroke-width="1.500"/><use href="#ddg" x="1906" y="158"/>
<use href="#up" x="1905" y="178"/><use href="#dn" x="1905" y="981"/>

<!-- tree icons controllers -->
<g>
<use href="#ca" x="1616" y="180"/><use href="#lk" x="1629" y="180"/><text class="vb" x="1635" y="183.500">VB</text>
<use href="#ca" x="1616" y="198"/><use href="#pl" x="1629" y="198"/><text class="vb" x="1635" y="201.500">VB</text>
<use href="#ca" x="1616" y="216"/><use href="#lk" x="1629" y="216"/><text class="vb" x="1635" y="219.500">VB</text>
<use href="#ca" x="1616" y="234"/><use href="#lk" x="1629" y="234"/><text class="vb" x="1635" y="237.500">VB</text>
<use href="#ca" x="1616" y="252"/><use href="#lk" x="1629" y="252"/><text class="vb" x="1635" y="255.500">VB</text>
<use href="#ca" x="1616" y="270"/><use href="#lk" x="1629" y="270"/><text class="vb" x="1635" y="273.500">VB</text>
<use href="#ex" x="1616" y="288"/><use href="#ck" x="1629" y="288"/><text class="vb" x="1635" y="291.500">VB</text>
<use href="#ca" x="1634" y="306"/><path d="M1653 300h5v4h-5zM1661 305h4v4h-4zM1655 308h4v4h-4zM1657 302l5 4" fill="#C27D1A" stroke="#C27D1A"/>
<use href="#ca" x="1616" y="324"/><use href="#lk" x="1629" y="324"/><text class="vb" x="1635" y="327.500">VB</text>
<use href="#ca" x="1616" y="342"/><use href="#lk" x="1629" y="342"/><text class="vb" x="1635" y="345.500">VB</text>
<use href="#ca" x="1616" y="360"/><use href="#lk" x="1629" y="360"/><text class="vb" x="1635" y="363.500">VB</text>
<use href="#ca" x="1616" y="378"/><use href="#pl" x="1629" y="378"/><text class="vb" x="1635" y="381.500">VB</text>
<use href="#ca" x="1616" y="396"/><use href="#lk" x="1629" y="396"/><text class="vb" x="1635" y="399.500">VB</text>
<use href="#ca" x="1616" y="414"/><use href="#lk" x="1629" y="414"/><text class="vb" x="1635" y="417.500">VB</text>
<use href="#ca" x="1616" y="432"/><use href="#lk" x="1629" y="432"/><text class="vb" x="1635" y="435.500">VB</text>
<use href="#ca" x="1616" y="450"/><use href="#lk" x="1629" y="450"/><text class="vb" x="1635" y="453.500">VB</text>
<use href="#ca" x="1616" y="468"/><use href="#lk" x="1629" y="468"/><text class="vb" x="1635" y="471.500">VB</text>
<use href="#ca" x="1616" y="486"/><use href="#ck" x="1629" y="486"/><text class="vb" x="1635" y="489.500">VB</text>
<use href="#ca" x="1616" y="504"/><use href="#lk" x="1629" y="504"/><text class="vb" x="1635" y="507.500">VB</text>
<use href="#ca" x="1616" y="522"/><use href="#lk" x="1629" y="522"/><text class="vb" x="1635" y="525.500">VB</text>
<use href="#ex" x="1598" y="540"/><use href="#fe" x="1623" y="540"/>
<use href="#ca" x="1616" y="558"/><use href="#pl" x="1629" y="558"/><text class="vb" x="1635" y="561.500">VB</text>
<use href="#ca" x="1616" y="576"/><use href="#ck" x="1629" y="576"/><text class="vb" x="1635" y="579.500">VB</text>
<use href="#ca" x="1616" y="594"/><use href="#pl" x="1629" y="594"/><text class="vb" x="1635" y="597.500">VB</text>
<use href="#ex" x="1598" y="612"/><use href="#fe" x="1623" y="612"/>
<use href="#ca" x="1616" y="630"/><use href="#pl" x="1629" y="630"/><text class="vb" x="1635" y="633.500">VB</text>
<use href="#ca" x="1616" y="648"/><use href="#pl" x="1629" y="648"/><text class="vb" x="1635" y="651.500">VB</text>
<use href="#ca" x="1598" y="666"/><use href="#fo" x="1623" y="666"/>
<use href="#ex" x="1598" y="684"/><use href="#fe" x="1623" y="684"/>
<use href="#ca" x="1616" y="702"/><use href="#fo" x="1642" y="702"/>
<use href="#ca" x="1616" y="720"/><use href="#fo" x="1642" y="720"/>
<use href="#ex" x="1616" y="738"/><use href="#fe" x="1642" y="738"/>
<use href="#pl" x="1647" y="756"/><text class="at" x="1652" y="759.500">[@]</text>
<use href="#ca" x="1616" y="774"/><use href="#fo" x="1642" y="774"/>
<use href="#ca" x="1616" y="792"/><use href="#fo" x="1642" y="792"/>
<use href="#ca" x="1616" y="810"/><use href="#fo" x="1642" y="810"/>
<use href="#ex" x="1616" y="828"/><use href="#fe" x="1642" y="828"/>
<use href="#lk" x="1647" y="846"/><text class="at" x="1652" y="849.500">[@]</text>
<use href="#ex" x="1616" y="864"/><use href="#fe" x="1642" y="864"/>
<use href="#ck" x="1647" y="882"/><text class="at" x="1652" y="885.500">[@]</text>
<use href="#ck" x="1647" y="900"/><text class="at" x="1652" y="903.500">[@]</text>
<use href="#ck" x="1647" y="918"/><text class="at" x="1652" y="921.500">[@]</text>
<use href="#ca" x="1616" y="936"/><use href="#fo" x="1642" y="936"/>
<use href="#ca" x="1616" y="954"/><use href="#fo" x="1642" y="954"/>
<use href="#ex" x="1616" y="972"/><use href="#fe" x="1642" y="972"/>
<use href="#ck" x="1647" y="988"/>
</g>
</svg>

<!-- watermark -->
<div class="a" style="left:1599px;top:947px;font-size:20px;line-height:24px;color:rgba(120,120,125,.45)">Activate Windows</div>
<div class="a" style="left:1599px;top:972px;font-size:15px;line-height:18px;color:rgba(120,120,125,.45)">Go to Settings to activate Windows.</div>

<!-- immediate window -->
<div class="bx" style="left:653px;top:137px;width:772px;height:214px;background:#E6E7E8;border:1px solid #2E3F75;box-shadow:0 0 7px rgba(60,70,110,.35)">
<div class="bx" style="left:0;top:0;width:772px;height:21px;background:#F5CC84;line-height:23px;text-indent:4px">Immediate Window</div>
<div class="bx" style="left:2px;top:87px;width:308px;height:17px;background:#8E9BBC"></div>
<pre style="left:2px;top:73px;line-height:15px">? Request.Form("ContactCheckBox")
"cc1b2bcd-d9d6-4ec2-94e3-c684005a938b,false"
? Request.Form("DeleteDriverAtAll")
"false"</pre>
<div class="bx" style="left:756px;top:114px;width:12px;height:36px;background:#C2C3C9"></div>
<div class="bx" style="left:16px;top:201px;width:638px;height:9px;background:#C2C3C9"></div>
<svg width="772" height="214" viewBox="0 0 772 214">
<path d="M723 7h9l-4.500 5z" fill="#6B5A2E"/>
<path d="M738 5h9v11h-9zM738 7.500h9" fill="none" stroke="#2E2E2E" stroke-width="1.300"/>
<path d="M757 5l8 10M765 5l-8 10" stroke="#2E2E2E" stroke-width="1.300"/>
<path d="M757.500 31h9l-4.500-5z" fill="#9A9CA8"/><path d="M757.500 187h9l-4.500 5z" fill="#9A9CA8"/>
<path d="M11 201v9l-4-4.500z" fill="#9A9CA8"/><path d="M741 201v9l4-4.500z" fill="#9A9CA8"/>
<path d="M308 104l0 15 3.500-3 2.500 6 2.500-1-2.500-5.500 4.500-.5z" fill="#fff" stroke="#222" stroke-width=".9"/>
</svg>
</div>
</body></html>
